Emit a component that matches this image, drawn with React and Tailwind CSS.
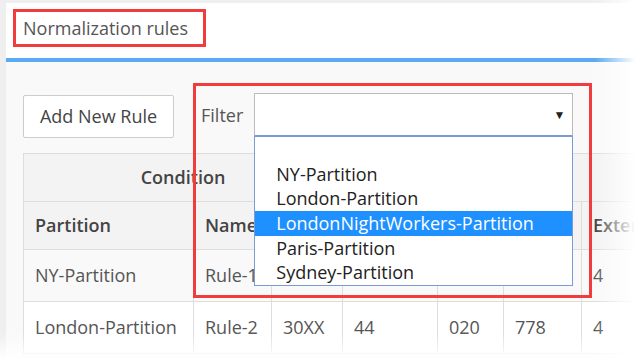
import React from "react";

const partitions = [
  "",
  "NY-Partition",
  "London-Partition",
  "LondonNightWorkers-Partition",
  "Paris-Partition",
  "Sydney-Partition",
];

// values under the open dropdown are not visible, so they are left blank
const rows = [
  { partition: "NY-Partition", name: "Rule-1", pattern: "", cc: "", area: "", prefix: "", ext: "4" },
  { partition: "London-Partition", name: "Rule-2", pattern: "30XX", cc: "44", area: "020", prefix: "778", ext: "4" },
];

const headers = ["Partition", "Name", "", "", "", "", "Extension"];

export default function App() {
  const selected = "LondonNightWorkers-Partition";

  return (
    <div className="relative w-[635px] h-[360px] overflow-hidden bg-[#efefef] pl-[6px] pt-[3px] font-['Open_Sans',sans-serif] text-[#555]">
      {/* Header */}
      <div className="h-[59px] bg-white border-b-[4px] border-[#5aabf4] pl-[7px] pt-[6px]">
        <div className="w-[193px] h-[38px] border-[3px] border-[#f03c3c] pl-[7px] flex items-center text-[18px] text-[#555]">
          Normalization rules
        </div>
      </div>

      {/* Content */}
      <div className="relative h-full bg-[#f9f9f9] pl-[17px] pt-[31px]">
        <div className="flex items-start">
          <button className="mt-[2px] w-[151px] h-[43px] bg-white border border-[#cccccc] rounded-[2px] text-[18px] text-[#444]">
            Add New Rule
          </button>
          <span className="ml-[27px] mt-[9px] text-[18px] text-[#555]">Filter</span>
          <div className="relative ml-[11px] w-[319px] h-[43px] bg-white border border-[#bbbbbb] border-b-[#7a9bd3]">
            <span className="absolute right-[7px] top-[12px] text-[12px] text-[#222]">▼</span>
            <ul className="absolute left-[-1px] top-[42px] w-[319px] bg-white border border-[#7a9bd3] z-10">
              {partitions.map((p, i) => (
                <li
                  key={i}
                  className={
                    "h-[24.7px] pl-[21px] text-[18px] leading-[24.7px] whitespace-nowrap " +
                    (p === selected ? "bg-[#1e90ff] text-white" : "text-[#222]")
                  }
                >
                  {p}
                </li>
              ))}
            </ul>
          </div>
        </div>

        <table className="mt-[15px] table-fixed border-collapse w-[700px] text-[18px]">
          <colgroup>
            <col className="w-[170px]" />
            <col className="w-[78px]" />
            <col className="w-[71px]" />
            <col className="w-[95px]" />
            <col className="w-[66px]" />
            <col className="w-[78px]" />
            <col className="w-[142px]" />
          </colgroup>
          <thead>
            <tr className="h-[48px] bg-[#f3f3f3]">
              <th colSpan={3} className="border border-[#dddddd] font-semibold text-[#444]">
                Condition
              </th>
              <th colSpan={4} className="border border-[#dddddd]" />
            </tr>
            <tr className="h-[48px] bg-[#f3f3f3]">
              {headers.map((h, i) => (
                <th key={i} className="border border-[#dddddd] px-[11px] text-left font-semibold text-[#444] whitespace-nowrap overflow-hidden">
                  {h}
                </th>
              ))}
            </tr>
          </thead>
          <tbody>
            {rows.map((r, i) => (
              <tr key={r.name} className={"h-[52px] " + (i === 0 ? "bg-[#f9f9f9]" : "bg-white")}>
                {[r.partition, r.name, r.pattern, r.cc, r.area, r.prefix, r.ext].map((v, j) => (
                  <td key={j} className="border border-[#dddddd] px-[11px] text-[#555] whitespace-nowrap">
                    {v}
                  </td>
                ))}
              </tr>
            ))}
          </tbody>
        </table>

        {/* annotation around the filter */}
        <div className="absolute left-[187px] top-[21px] w-[399px] h-[215px] border-[3px] border-[#f03c3c] z-20 pointer-events-none" />
      </div>

      {/* faded edges */}
      <div className="absolute right-0 top-0 h-full w-[40px] bg-linear-to-r from-transparent to-white z-30" />
      <div className="absolute left-0 bottom-0 w-full h-[28px] bg-linear-to-b from-transparent to-white z-30" />
    </div>
  );
}
